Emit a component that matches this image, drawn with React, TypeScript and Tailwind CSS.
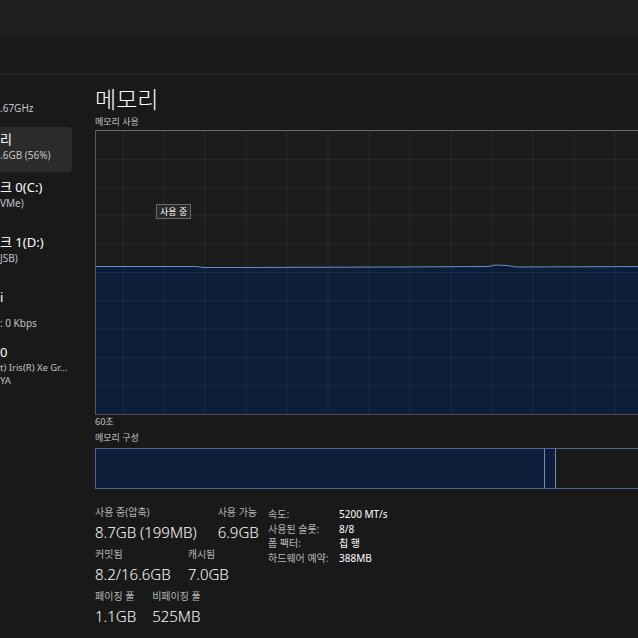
const font = { fontFamily: '"Noto Sans", "Noto Sans CJK KR", sans-serif' };

function UsageChart() {
  const w = 560;
  const h = 283;
  const cols = Array.from({ length: 13 }, (_, i) => 27 + i * 41);
  const rows = Array.from({ length: 9 }, (_, i) => (i + 1) * 28.3);
  const top = 'M0 135.5 L100 135.5 L108 136.5 L150 136.5 L300 136 L392 135.5 L400 134 L412 134.5 L420 136 L560 135.5';

  return (
    <svg width={w} height={h} viewBox={`0 0 ${w} ${h}`} className="block">
      <path d={`${top} L560 ${h} L0 ${h} Z`} fill="#0d1e3b" />
      {rows.map((y) => (
        <line key={y} x1={0} x2={w} y1={y} y2={y} stroke="rgba(255,255,255,0.06)" strokeWidth={1} />
      ))}
      {cols.map((x) => (
        <line key={x} x1={x} x2={x} y1={0} y2={h} stroke="rgba(255,255,255,0.06)" strokeWidth={1} />
      ))}
      <path d={top} fill="none" stroke="#6f8fc4" strokeWidth={1} />
    </svg>
  );
}

function Stat({ label, value }: { label: string; value: string }) {
  return (
    <div className="flex flex-col">
      <span className="text-[10px] leading-[14px] text-[#b8b8b8]">{label}</span>
      <span className="mt-[3px] text-[15px] font-light leading-[20px] text-white">{value}</span>
    </div>
  );
}

export default function App() {
  const specs = [
    ['속도:', '5200 MT/s'],
    ['사용된 슬롯:', '8/8'],
    ['폼 팩터:', '칩 행'],
    ['하드웨어 예약:', '388MB']
  ];

  return (
    <div className="flex h-[638px] w-[638px] flex-col overflow-hidden bg-[#191919] text-white" style={font}>
      <div className="h-[36px] shrink-0 bg-[#202020]" />
      <div className="h-[39px] shrink-0 border-b border-[#262626] bg-[#1b1b1b]" />

      <div className="flex min-h-0 flex-1">
        {/* Sidebar (clipped at the window edge) */}
        <div className="w-[72px] shrink-0 overflow-hidden whitespace-nowrap">
          <p className="mt-[26px] text-[10px] leading-[14px] text-[#c4c4c4]">.67GHz</p>

          <div className="mt-[12px] h-[45px] rounded-r-[4px] bg-[#2b2b2b] pt-[3px]">
            <p className="text-[13px] leading-[18px] text-white">리</p>
            <p className="text-[10px] leading-[14px] text-[#c4c4c4]">.6GB (56%)</p>
          </div>

          <p className="mt-[6px] text-[13px] leading-[18px] text-white">크 0(C:)</p>
          <p className="text-[10px] leading-[14px] text-[#c4c4c4]">VMe)</p>

          <p className="mt-[23px] text-[13px] leading-[18px] text-white">크 1(D:)</p>
          <p className="text-[10px] leading-[14px] text-[#c4c4c4]">JSB)</p>

          <p className="mt-[23px] text-[13px] leading-[18px] text-white">i</p>
          <p className="mt-[10px] text-[10px] leading-[14px] text-[#c4c4c4]">: 0 Kbps</p>

          <p className="mt-[13px] text-[13px] leading-[18px] text-white">0</p>
          <p className="text-[9.5px] leading-[13px] text-[#c4c4c4]">t) Iris(R) Xe Gr...</p>
          <p className="text-[9.5px] leading-[13px] text-[#c4c4c4]">YA</p>
        </div>

        {/* Main panel */}
        <div className="flex min-w-0 flex-1 flex-col pl-[23px]">
          <h1 className="mt-[11px] text-[23px] font-light leading-[26px] text-white">메모리</h1>
          <p className="mt-[4px] text-[9px] leading-[12px] text-[#c4c4c4]">메모리 사용</p>

          <div className="relative mt-[2px] w-[560px] shrink-0 border-l border-t border-b border-l-[#5a5a5a] border-t-[#6a6a6a] border-b-[#564857] bg-[#1c1c1c]">
            <UsageChart />
            <span className="absolute left-[60px] top-[73px] border border-[#6a6a6a] bg-[#2a2a2a] px-[3px] text-[9px] leading-[13px] text-white">
              사용 중
            </span>
          </div>

          <p className="mt-[1px] text-[9px] leading-[12px] text-[#c4c4c4]">60초</p>
          <p className="mt-[4px] text-[9px] leading-[12px] text-[#c4c4c4]">메모리 구성</p>

          <div className="mt-[4px] flex h-[41px] w-[560px] shrink-0 border border-[#4b6594]">
            <div className="w-[448px] bg-[#0d1d3a]" />
            <div className="w-[12px] border-x border-[#7189b6] bg-[#0d1d3a]" />
            <div className="flex-1 bg-[#1a1a1a]" />
          </div>

          <div className="mt-[16px] flex">
            <div className="flex w-[173px] shrink-0 flex-col gap-[5px]">
              <div className="flex gap-[21px]">
                <Stat label="사용 중(압축)" value="8.7GB (199MB)" />
                <Stat label="사용 가능" value="6.9GB" />
              </div>
              <div className="flex gap-[17px]">
                <Stat label="커밋됨" value="8.2/16.6GB" />
                <Stat label="캐시됨" value="7.0GB" />
              </div>
              <div className="flex gap-[16px]">
                <Stat label="페이징 풀" value="1.1GB" />
                <Stat label="비페이징 풀" value="525MB" />
              </div>
            </div>

            <div className="mt-[2px] flex flex-col">
              {specs.map(([k, v]) => (
                <div key={k} className="flex text-[10px] leading-[14.7px]">
                  <span className="w-[71px] text-[#b8b8b8]">{k}</span>
                  <span className="text-white">{v}</span>
                </div>
              ))}
            </div>
          </div>
        </div>
      </div>
    </div>
  );
}
